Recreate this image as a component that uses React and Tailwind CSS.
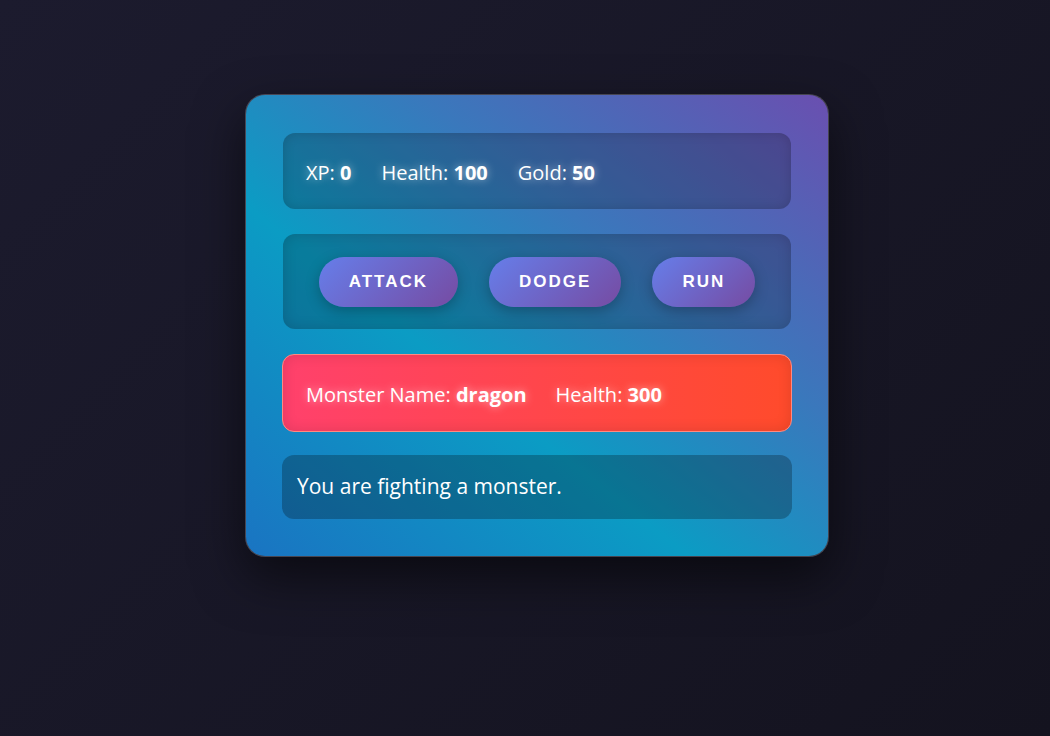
import React from 'react';

const font = { fontFamily: '"Open Sans", "Noto Sans", sans-serif' };

const Stat = ({ label, value }) => (
  <span className="[text-shadow:0_0_8px_rgba(255,255,255,0.55)]">
    {label}: <strong className="font-bold">{value}</strong>
  </span>
);

const App = () => {
  const player = { xp: 0, health: 100, gold: 50 };
  const monster = { name: 'dragon', health: 300 };
  const actions = ['Attack', 'Dodge', 'Run'];

  return (
    <div
      className="min-h-screen bg-[linear-gradient(135deg,#1c1b2e,#14131f)] flex justify-center pl-6 pt-[94px]"
      style={font}
    >
      <div className="w-[584px] h-[463px] rounded-[20px] border border-white/20 bg-clip-padding bg-[linear-gradient(to_top_right,#1a74c2_0%,#0b9cc4_38%,#3a78bc_65%,#6a4fb0_100%)] shadow-[0_20px_50px_rgba(0,0,0,0.55)] px-[37px] pt-[38px] flex flex-col text-white">
        {/* Stats */}
        <div className="h-[76px] rounded-xl bg-black/20 shadow-[inset_0_0_12px_rgba(0,0,0,0.15)] flex items-center gap-[30px] px-[23px] pt-[3px] text-[20px]">
          <Stat label="XP" value={player.xp} />
          <Stat label="Health" value={player.health} />
          <Stat label="Gold" value={player.gold} />
        </div>

        {/* Controls */}
        <div className="mt-[25px] h-[95px] rounded-xl bg-black/20 shadow-[inset_0_0_14px_rgba(0,0,0,0.15)] flex items-center justify-center gap-[31px]">
          {actions.map((a) => (
            <button
              key={a}
              className="h-[50px] px-[30px] rounded-full bg-[linear-gradient(135deg,#667eea,#764ba2)] shadow-[0_4px_14px_rgba(0,0,0,0.25)] text-[17px] font-bold uppercase tracking-[2px] text-white"
              style={{ fontFamily: '"Liberation Sans", Arial, sans-serif' }}
            >
              {a}
            </button>
          ))}
        </div>

        {/* Monster */}
        <div className="mt-[25px] -mx-px h-[78px] rounded-xl border border-[#ff8a80] bg-[linear-gradient(to_right,#ff416c,#ff4b2b)] shadow-[inset_0_0_14px_rgba(0,0,0,0.12)] flex items-center gap-[29px] px-[23px] pt-[3px] text-[20px]">
          <Stat label="Monster Name" value={monster.name} />
          <Stat label="Health" value={monster.health} />
        </div>

        {/* Message */}
        <div className="mt-[23px] -mx-px h-[64px] rounded-xl bg-black/25 flex items-center px-[15px] text-[21px]">
          You are fighting a monster.
        </div>
      </div>
    </div>
  );
};

export default App;
